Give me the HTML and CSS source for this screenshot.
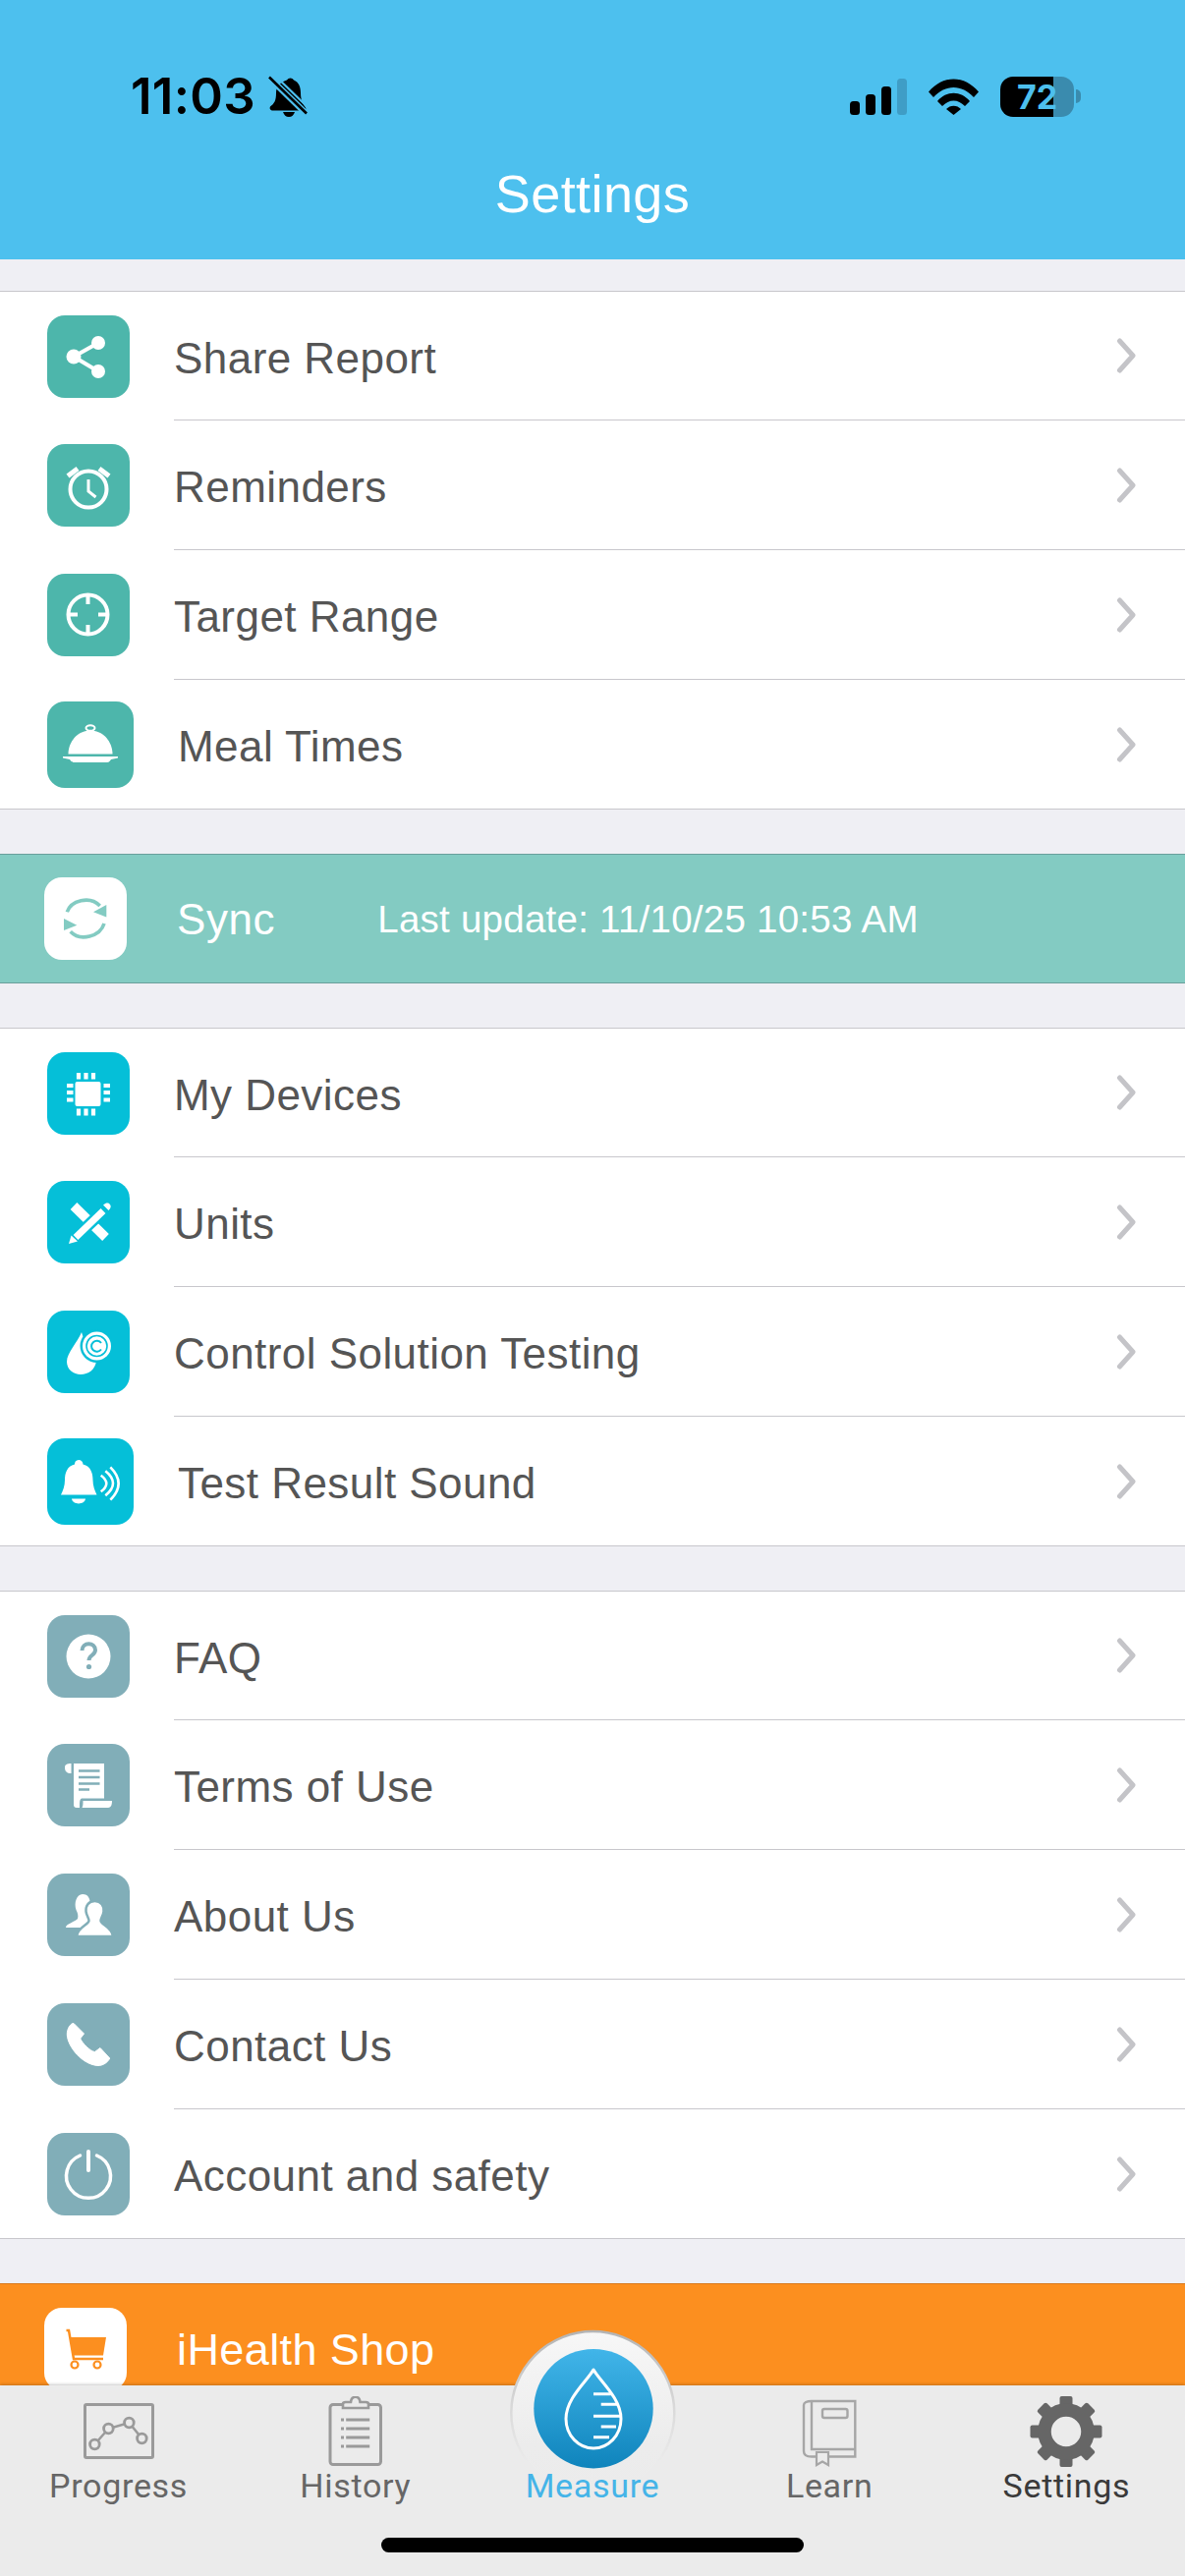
FILE: index.html
```html
<!DOCTYPE html>
<html lang="en">
<head>
<meta charset="utf-8">
<title>Settings</title>
<link rel="stylesheet" href="styles.css">
</head>
<body>
<svg class="defs" width="0" height="0" aria-hidden="true">
  <symbol id="chev" viewBox="0 0 20 36"><path d="M3.500 3 L17 18 L3.500 33" fill="none" stroke="#c4c4c8" stroke-width="5" stroke-linecap="round" stroke-linejoin="round"/></symbol>
</svg>
<div class="screen">
  <header class="header">
    <div class="status">
      <div class="status-left">
        <span class="time">11:03</span>
        <svg class="bell" viewBox="0 0 40 42" width="40" height="42"><path d="M19 4.500a4 4 0 0 1 7 0c5 2 7 7 7 13 0 7 2 11 5 15 1 2 0 3-2 3H5c-3 0-4-2-3-4 4-3 6-6 6-14 0-6 4-11 11-13z" fill="#000"/><path d="M15 37h12c-1 3-3 5-6 5s-5-2-6-5z" fill="#000"/><path d="M2 3 L38 38" stroke="#4dc0ee" stroke-width="6.500"/><path d="M1 1.500 L39 38.500" stroke="#000" stroke-width="2.600"/><path d="M7 0 L40 32" stroke="#4dc0ee" stroke-width="2.200"/></svg>
      </div>
      <div class="status-right">
        <svg class="signal" viewBox="0 0 58 37" width="58" height="37"><rect x="0" y="23" width="10" height="14" rx="3.500" fill="#000"/><rect x="16" y="16" width="10" height="21" rx="3.500" fill="#000"/><rect x="32" y="8" width="10" height="29" rx="3.500" fill="#000"/><rect x="48" y="0" width="10" height="37" rx="3.500" fill="#3f9dc6"/></svg>
        <svg class="wifi" viewBox="0 0 51 37" width="51" height="37"><path d="M0 13.500 C14 -4 37 -4 51 13.500 L46 19 C34 5.500 17 5.500 5 19 Z" fill="#000"/><path d="M9 23 C18 12 33 12 42 23 L37 28 C30 20.500 21 20.500 14 28 Z" fill="#000"/><path d="M18 31 C22 26.500 29 26.500 33 31 L25.500 37 Z" fill="#000"/></svg>
        <div class="battery-wrap">
          <div class="battery">72</div>
          <span class="battery-tip"></span>
        </div>
      </div>
    </div>
    <h1 class="title">Settings</h1>
  </header>

  <main class="content">
    <section class="group">
      <div class="row">
        <div class="ico teal"><svg viewBox="0 0 84 84"><path d="M52 28 L27 42 L52 57" fill="none" stroke="#fff" stroke-width="4"/><circle cx="52" cy="28" r="7" fill="#fff"/><circle cx="27" cy="42" r="7.500" fill="#fff"/><circle cx="52" cy="57" r="7" fill="#fff"/></svg></div>
        <div class="row-main"><span class="label">Share Report</span><svg class="chev"><use href="#chev"/></svg></div>
      </div>
      <div class="row">
        <div class="ico teal"><svg viewBox="0 0 84 84"><circle cx="42" cy="46" r="18.500" fill="none" stroke="#fff" stroke-width="4"/><path d="M42 36 V48 L49.500 54" fill="none" stroke="#fff" stroke-width="3"/><path d="M21 32.500 L31 25 M63 32.500 L53 25" stroke="#fff" stroke-width="5"/></svg></div>
        <div class="row-main"><span class="label">Reminders</span><svg class="chev"><use href="#chev"/></svg></div>
      </div>
      <div class="row">
        <div class="ico teal"><svg viewBox="0 0 84 84"><circle cx="41.500" cy="41.500" r="20" fill="none" stroke="#fff" stroke-width="4"/><path d="M41.500 22 V31 M41.500 52 V61 M22 41.500 H31 M52 41.500 H61" stroke="#fff" stroke-width="4"/></svg></div>
        <div class="row-main"><span class="label">Target Range</span><svg class="chev"><use href="#chev"/></svg></div>
      </div>
      <div class="row">
        <div class="ico ico-lg teal"><svg viewBox="0 0 88 88"><ellipse cx="44" cy="27" rx="4.500" ry="2.800" fill="none" stroke="#fff" stroke-width="2"/><path d="M21.500 53.500 C21.500 41 31 29.500 44 29.500 C57 29.500 66.500 41 66.500 53.500 Z" fill="#fff"/><path d="M16 56 H72 V57.500 L65 59 C63 62 62 62 60 62 H28 C26 62 25 62 23 59 L16 57.500 Z" fill="#fff"/></svg></div>
        <div class="row-main"><span class="label">Meal Times</span><svg class="chev"><use href="#chev"/></svg></div>
      </div>
    </section>

    <section class="band band-sync">
      <div class="ico white"><svg viewBox="0 0 84 84"><path d="M23.300 35.300 C27 24 46 18 56.700 29" fill="none" stroke="#83cbc2" stroke-width="3.600"/><path d="M61 47 C57 60 37 66 26.700 55.300" fill="none" stroke="#83cbc2" stroke-width="3.600"/><path d="M63.300 28 V40.500 L50 35.300 Z" fill="#83cbc2"/><path d="M20 42 V54 L33.300 48.700 Z" fill="#83cbc2"/></svg></div>
      <span class="band-label">Sync</span>
      <span class="band-note">Last update: 11/10/25 10:53 AM</span>
    </section>

    <section class="group">
      <div class="row">
        <div class="ico cyan"><svg viewBox="0 0 84 84"><rect x="28.500" y="30" width="26" height="25" rx="2" fill="#fff"/><path d="M32 21 V27.500 M39.500 21 V27.500 M47 21 V27.500 M32 57.500 V64.500 M39.500 57.500 V64.500 M47 57.500 V64.500 M20 34 H26.500 M20 41 H26.500 M20 48.500 H26.500 M57.500 34 H64 M57.500 41 H64 M57.500 48.500 H64" stroke="#fff" stroke-width="4.200"/></svg></div>
        <div class="row-main"><span class="label">My Devices</span><svg class="chev"><use href="#chev"/></svg></div>
      </div>
      <div class="row">
        <div class="ico cyan"><svg viewBox="0 0 84 84"><path d="M27 25.500 L59.500 57.500" stroke="#fff" stroke-width="9.500"/><path d="M24 62 L62 26" stroke="#05bfd8" stroke-width="12"/><path d="M29 57.500 L57 30.500" stroke="#fff" stroke-width="7"/><path d="M22 64 L24.500 55.500 L31 61.500 Z" fill="#fff"/><path d="M57 24.500 C60 21.500 63 22 64 24 C65.500 26 64.500 28 62.500 30 Z" fill="#fff"/></svg></div>
        <div class="row-main"><span class="label">Units</span><svg class="chev"><use href="#chev"/></svg></div>
      </div>
      <div class="row">
        <div class="ico cyan"><svg viewBox="0 0 84 84"><path d="M35 22 C31 32 20 43 20 52 C20 60 27 65 34 65 C42 65 49 60 50 51 C50 40 37 32 35 22 Z" fill="#fff"/><circle cx="50.500" cy="36" r="17" fill="#05bfd8"/><circle cx="50.500" cy="36" r="14.500" fill="#fff"/><circle cx="50.500" cy="36" r="10.500" fill="none" stroke="#05bfd8" stroke-width="1.600"/><path d="M55 33 A5.500 5.500 0 1 0 55 39.500" fill="none" stroke="#05bfd8" stroke-width="2"/></svg></div>
        <div class="row-main"><span class="label">Control Solution Testing</span><svg class="chev"><use href="#chev"/></svg></div>
      </div>
      <div class="row">
        <div class="ico ico-lg cyan"><svg viewBox="0 0 88 88"><path d="M32 22 a4.500 4.500 0 0 1 4.500 4.500 c8 2 10 9 10 16 c0 6 2 11 4 15 H14 c2-4 4-9 4-15 c0-7 2-14 10-16 a4.500 4.500 0 0 1 4-4.500 Z" fill="#fff"/><path d="M25 61.500 H39 C38 68 26 68 25 61.500 Z" fill="#fff"/><path d="M54.700 37.700 Q65.900 46 54.700 54.300 M59.300 33.300 Q74.700 45.800 59.300 58.300 M64.300 29.300 Q81 46 64.300 62.700" fill="none" stroke="#fff" stroke-width="2.600"/></svg></div>
        <div class="row-main"><span class="label">Test Result Sound</span><svg class="chev"><use href="#chev"/></svg></div>
      </div>
    </section>

    <section class="group">
      <div class="row">
        <div class="ico slate"><svg viewBox="0 0 84 84"><circle cx="42" cy="42" r="22.500" fill="#fff"/><path d="M35.500 36 C35.500 27 49 27 49 35.500 C49 41 42.500 40.500 42.500 46" fill="none" stroke="#81aeb8" stroke-width="4"/><circle cx="42.500" cy="52.500" r="2.600" fill="#81aeb8"/></svg></div>
        <div class="row-main"><span class="label">FAQ</span><svg class="chev"><use href="#chev"/></svg></div>
      </div>
      <div class="row">
        <div class="ico slate"><svg viewBox="0 0 84 84"><path d="M18 24 C18 21 20 20 24.500 20 V30 C20 30 18 28 18 24 Z" fill="#fff"/><path d="M27 20 H58 V55.500 H36 C33 55.500 33 58 33 65 H30 C28 65 27 64 27 62 Z" fill="#fff"/><path d="M36.500 58 H66 C66 61 65.500 65 62 65 H35.500 C36.500 63 36.500 61 36.500 58 Z" fill="#fff"/><path d="M32 27.500 H53.500 M32 34 H53.500 M32 40.500 H53.500 M32 46.500 H43" stroke="#81aeb8" stroke-width="2.600"/></svg></div>
        <div class="row-main"><span class="label">Terms of Use</span><svg class="chev"><use href="#chev"/></svg></div>
      </div>
      <div class="row">
        <div class="ico slate"><svg viewBox="0 0 84 84"><path d="M36 21 C42 21 44 26 43.500 31 C43 35 41 37 41 40 C41 44 47 46 50 48 V55 H19 C19 51 29 49 31 46 C32 43 31 40 29.500 37 C27 30 30 21 36 21 Z" fill="#fff"/><path d="M48.500 28 C55 28 58 33 57.500 38.500 C57 43 54.500 45 54.500 48 C54.500 52 66 54 67 64 H30 C31 54 42.500 52 42.500 48 C42.500 45 40 43 39.500 38.500 C39 33 42 28 48.500 28 Z" fill="#fff" stroke="#81aeb8" stroke-width="2.500"/></svg></div>
        <div class="row-main"><span class="label">About Us</span><svg class="chev"><use href="#chev"/></svg></div>
      </div>
      <div class="row">
        <div class="ico slate"><svg viewBox="0 0 84 84"><path d="M27 20.500 C24 20 20 26 20.300 32 C20.600 44 36 63 52 63.500 C57 63.500 62 60 63.700 56 L54 45.500 L48.500 49.500 C44 49 36 41 33.700 36 L37.500 31 Z" fill="#fff" stroke="#fff" stroke-width="1" stroke-linejoin="round"/></svg></div>
        <div class="row-main"><span class="label">Contact Us</span><svg class="chev"><use href="#chev"/></svg></div>
      </div>
      <div class="row">
        <div class="ico slate"><svg viewBox="0 0 84 84"><path d="M33.500 23 A22.500 22.500 0 1 0 50.500 23" fill="none" stroke="#fff" stroke-width="3.500" stroke-linecap="round"/><path d="M42 19 V38" stroke="#fff" stroke-width="4" stroke-linecap="round"/></svg></div>
        <div class="row-main"><span class="label">Account and safety</span><svg class="chev"><use href="#chev"/></svg></div>
      </div>
    </section>

    <section class="band band-shop">
      <div class="ico white"><svg viewBox="0 0 84 84"><path d="M22.500 23 H25 L30 52 H60" fill="none" stroke="#fc8f1f" stroke-width="2.500"/><path d="M26 30 H63 L60 48.500 H29 Z" fill="#fc8f1f"/><circle cx="31" cy="58" r="3.500" fill="none" stroke="#fc8f1f" stroke-width="2.200"/><circle cx="54" cy="58" r="3.500" fill="none" stroke="#fc8f1f" stroke-width="2.200"/></svg></div>
      <span class="band-label">iHealth Shop</span>
    </section>
  </main>

  <nav class="tabbar">
    <div class="tabs">
      <div class="tab">
        <svg class="tab-ico" viewBox="0 0 80 76"><rect x="5.500" y="8.500" width="69" height="54" rx="1.500" fill="none" stroke="#9a9a9a" stroke-width="3"/><path d="M15.400 49 L29.400 33 L50.400 27 L63.400 43" fill="none" stroke="#9a9a9a" stroke-width="2.500"/><circle cx="15.400" cy="49" r="4.800" fill="#ebebeb" stroke="#9a9a9a" stroke-width="2.800"/><circle cx="29.400" cy="33" r="4.800" fill="#ebebeb" stroke="#9a9a9a" stroke-width="2.800"/><circle cx="50.400" cy="27" r="4.800" fill="#ebebeb" stroke="#9a9a9a" stroke-width="2.800"/><circle cx="63.400" cy="43" r="4.800" fill="#ebebeb" stroke="#9a9a9a" stroke-width="2.800"/></svg>
        <span class="tab-label">Progress</span>
      </div>
      <div class="tab">
        <svg class="tab-ico" viewBox="0 0 80 76"><rect x="14" y="8.500" width="51.500" height="61" rx="3" fill="none" stroke="#9a9a9a" stroke-width="3"/><path d="M27 12 V8 C27 6.500 28 6 30 6 H35 C35.500 2 37 .8 39.800 .8 C42.500 .8 44 2 44.500 6 H50 C52 6 53 6.500 53 8 V12 Z" fill="#ebebeb" stroke="#9a9a9a" stroke-width="2.600"/><path d="M30.200 24 H54.200 M30.200 33 H54.200 M30.200 42 H54.200 M30.200 51 H54.200" stroke="#9a9a9a" stroke-width="3"/><path d="M25 24 H28 M25 33 H28 M25 42 H28 M25 51 H28" stroke="#9a9a9a" stroke-width="3"/></svg>
        <span class="tab-label">History</span>
      </div>
      <div class="tab tab-measure">
        <svg class="measure-btn" viewBox="0 0 190 190" width="190" height="190">
          <defs>
            <linearGradient id="halo" x1="0" y1="0" x2="0" y2="1"><stop offset="0" stop-color="#f7f7f7"/><stop offset=".7" stop-color="#ececec"/><stop offset="1" stop-color="#ebebeb"/></linearGradient>
            <linearGradient id="haloLine" x1="0" y1="0" x2="0" y2="1"><stop offset="0" stop-color="#b4b4b4"/><stop offset=".45" stop-color="#d8d8d8"/><stop offset=".8" stop-color="#ebebeb"/></linearGradient>
            <linearGradient id="disc" x1="0" y1="0" x2="0" y2="1"><stop offset="0" stop-color="#41b5e9"/><stop offset="1" stop-color="#0f84bc"/></linearGradient>
          </defs>
          <circle cx="93.300" cy="91" r="83" fill="url(#halo)" stroke="url(#haloLine)" stroke-width="2.500"/>
          <circle cx="94" cy="86.700" r="60.700" fill="url(#disc)"/>
          <path d="M94 47 C88 58 66 76 66 97 C66 114 79 127 94 127 C109 127 122 114 122 97 C122 76 100 58 94 47 Z" fill="none" stroke="#fff" stroke-width="3" stroke-linejoin="round"/>
          <path d="M94 71.700 H111.700 M101.700 82.300 H119 M94 94.300 H121.700 M101.700 105 H117 M94 115.700 H110" stroke="#fff" stroke-width="3"/>
        </svg>
        <span class="tab-ico"></span>
        <span class="tab-label">Measure</span>
      </div>
      <div class="tab">
        <svg class="tab-ico" viewBox="0 0 80 76"><path d="M22 5 H66.300 V61.500 H22 C18 61.500 14 60.500 14 56 V9 C14 6.500 17 5 22 5 Z" fill="none" stroke="#a6a6a6" stroke-width="2.400"/><path d="M22 5 V54 H66.300" fill="none" stroke="#a6a6a6" stroke-width="2.400"/><rect x="33" y="13" width="25.500" height="9" rx="2" fill="none" stroke="#a6a6a6" stroke-width="2.400"/><path d="M27 57 H39 V70 L33 66.500 L27 70 Z" fill="#ebebeb" stroke="#a6a6a6" stroke-width="2.200"/></svg>
        <span class="tab-label">Learn</span>
      </div>
      <div class="tab">
        <svg class="tab-ico" viewBox="0 0 80 76"><g fill="#666"><rect x="33.500" y="0" width="13" height="15" rx="2"/><rect x="33.500" y="57" width="13" height="15" rx="2"/><rect x="3.500" y="29.500" width="15" height="13" rx="2"/><rect x="61.500" y="29.500" width="15" height="13" rx="2"/><rect x="33.500" y="0" width="13" height="15" rx="2" transform="rotate(45 40 36)"/><rect x="33.500" y="0" width="13" height="15" rx="2" transform="rotate(135 40 36)"/><rect x="33.500" y="0" width="13" height="15" rx="2" transform="rotate(225 40 36)"/><rect x="33.500" y="0" width="13" height="15" rx="2" transform="rotate(315 40 36)"/></g><circle cx="40" cy="36" r="22" fill="none" stroke="#666" stroke-width="13.500"/></svg>
        <span class="tab-label tab-label-active">Settings</span>
      </div>
    </div>
    <div class="home-indicator"></div>
  </nav>
</div>
</body>
</html>
```
FILE: styles.css
```css
* { box-sizing: border-box; margin: 0; padding: 0; }
html, body { width: 1206px; height: 2622px; overflow: hidden; }
body { font-family: "Liberation Sans", Arial, sans-serif; background: #efeff4; }
.defs { position: absolute; }

.screen { width: 1206px; height: 2622px; display: flex; flex-direction: column; overflow: hidden; background: #efeff4; }

.header { height: 264px; flex: none; background: #4dc0ee; padding-top: 77px; }
.status { height: 42px; display: flex; justify-content: space-between; align-items: center; padding: 0 106px 0 133px; }
.status-left { display: flex; align-items: center; gap: 13px; }
.time { font-family: Inter, sans-serif; font-weight: 600; font-size: 51px; line-height: 42px; color: #000; letter-spacing: .3px; }
.status-right { display: flex; align-items: center; gap: 22px; }
.battery-wrap { display: flex; align-items: center; gap: 2px; }
.battery { width: 75px; height: 41px; border-radius: 13px; background: linear-gradient(90deg, #000 0 72%, #3a8bae 72% 100%); color: #4dc0ee; font-family: Inter, sans-serif; font-weight: 700; font-size: 34px; line-height: 41px; text-align: center; }
.battery-tip { width: 5px; height: 14px; background: #3a8bae; border-radius: 0 7px 7px 0; }
.title { margin-top: 47px; font-size: 54px; font-weight: 400; line-height: 62px; letter-spacing: .4px; color: #fff; text-align: center; }

.content { flex: 1; min-height: 0; padding-top: 32px; display: flex; flex-direction: column; gap: 45px; overflow: hidden; }
.content > * { flex: none; }

.group { background: #fff; border-top: 1px solid #c8c7cc; border-bottom: 1px solid #c8c7cc; }
.row { height: 132px; display: flex; align-items: center; padding-left: 48px; }
.row:first-child, .row:last-child { height: 131px; }
.row-main { flex: 1; align-self: stretch; margin-left: 45px; padding-right: 50px; display: flex; align-items: center; justify-content: space-between; border-bottom: 1px solid #c8c7cc; }
.row:last-child .row-main { border-bottom: 0; }
.label { font-size: 44px; line-height: 52px; letter-spacing: .45px; color: #555; padding-top: 5px; }
.chev { width: 20px; height: 36px; display: block; }

.ico { width: 84px; height: 84px; flex: none; border-radius: 18px; }
.ico svg { display: block; width: 100%; height: 100%; }
.ico-lg { width: 88px; height: 88px; }
.teal { background: #4db6ab; }
.cyan { background: #05bfd8; }
.slate { background: #81aeb8; }
.white { background: #fff; }

.band { height: 132px; display: flex; align-items: center; padding-left: 45px; color: #fff; }
.band-sync { background: #83cbc2; border-top: 1px solid #6a9f9b; border-bottom: 1px solid #6a9f9b; }
.band-shop { background: #fc8f1f; border-top: 1px solid #d9781a; }
.band-label { margin-left: 51px; font-size: 44px; line-height: 52px; letter-spacing: .6px; padding-top: 2px; }
.band-note { margin-left: 104px; font-size: 38.500px; line-height: 52px; letter-spacing: .25px; padding-top: 2px; }
.band-shop .band-label { font-size: 45px; letter-spacing: .4px; }

.tabbar { position: relative; height: 194px; flex: none; background: #ebebeb; box-shadow: 0 -1px 3px rgba(0, 0, 0, .22); display: flex; flex-direction: column; }
.tabs { display: grid; grid-template-columns: repeat(5, 1fr); padding-top: 11px; }
.tab { display: flex; flex-direction: column; align-items: center; }
.tab-ico { display: block; width: 80px; height: 76px; margin-bottom: -5px; }
.tab-label { font-family: Roboto, sans-serif; font-size: 34px; line-height: 40px; letter-spacing: .7px; color: #666; }
.tab-label-active { color: #3a3a3a; }
.tab-measure { position: relative; }
.tab-measure .tab-label { color: #45b4e8; position: relative; }
.measure-btn { position: absolute; left: 27.800px; top: -74px; display: block; }
.home-indicator { width: 430px; height: 15px; margin: auto auto 24px; border-radius: 8px; background: #000; }
```
